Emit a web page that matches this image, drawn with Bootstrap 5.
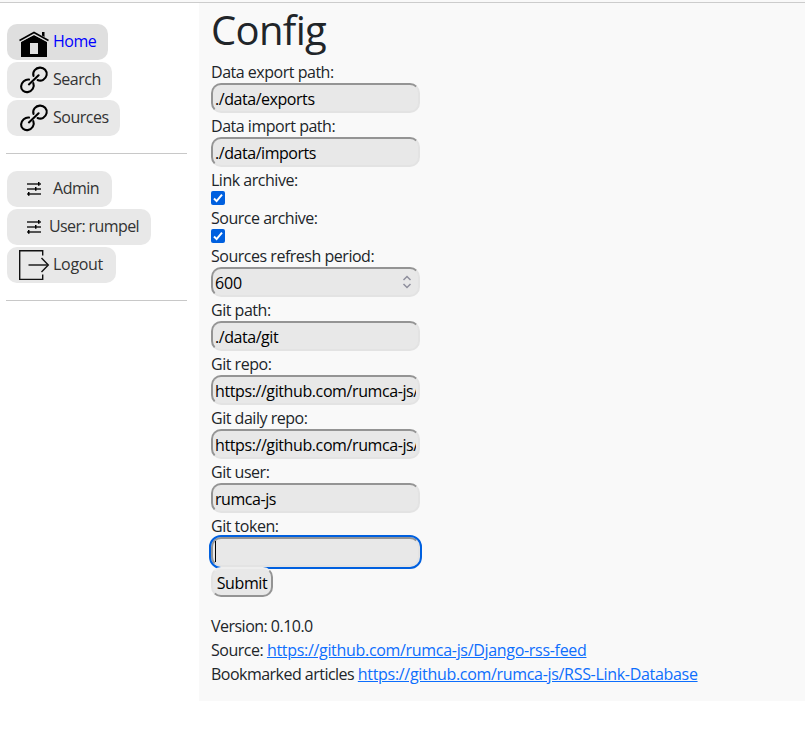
<!DOCTYPE html>
<html lang="en">
<head>
<meta charset="utf-8">
<title>Config</title>
<meta name="viewport" content="width=device-width, initial-scale=1">
<link href="https://cdn.jsdelivr.net/npm/bootstrap@5.3.0/dist/css/bootstrap.min.css" rel="stylesheet">
<style>
body{font-family:"Segoe UI","Open Sans","Noto Sans",sans-serif;font-size:16px;letter-spacing:-.48px;overflow:hidden}
.topline{height:3px;background:#f9f9f9;border-bottom:1px solid #ccc}
.side{width:199px;padding:21px 12px 0 7px}
.menu-link{height:36px;padding-left:11px;margin-bottom:2px;border-radius:10px;background:#e8e8e8;color:#333;line-height:34px}
.menu-link svg{width:32px;height:32px;margin:2px 3px 0 0;flex:none}
.menu-link span{height:36px;white-space:nowrap}
.menu-link.current{background:#dfdfdf;color:#00f}
.w-home{width:101px}.w-search,.w-admin{width:105px}.w-sources{width:113px}.w-user{width:144px;letter-spacing:-.6px}.w-logout{width:109px;letter-spacing:-.3px}
.menu-link.w-user svg{margin-right:-1px}
.divider{height:1px;background:#c8c8c8;margin:17px 0 17px -1px}
.main{height:698px;background:#f9f9f9;padding-left:12px}
.main h1{font-size:40px;line-height:48px;height:48px;margin:0 0 8px;font-weight:400;letter-spacing:-.65px;padding-top:3px}
.main form{height:538px}
.main label{height:24px;line-height:27px}
.field{width:209px;height:30px;padding:2px 2px 0;border:2px solid;border-color:#949494 #e3e3e3 #e3e3e3 #949494;border-radius:10px;background:#e8e8e8;color:#000;letter-spacing:-.45px;outline:0;line-height:24px}
.field.active{outline:2px solid #0060df;outline-offset:0}
.field.url{letter-spacing:-.4px}
.field.number{letter-spacing:-.2px}
.stepper{width:209px;position:relative}
.stepper svg{position:absolute;right:8px;top:8px;width:10px;height:14px}
.tick{width:14px;height:14px;background:#0060df;border-radius:2px}
.send{width:62px;height:30px;border:2px solid;border-color:#eee #949494 #949494 #e3e3e3;border-radius:10px;background:#e8e8e8;color:#000;padding:2px 0 0;letter-spacing:-.4px;line-height:24px}
.about{line-height:24px;padding-top:17px}
.about div{height:24px;white-space:nowrap}
.about div:first-child,.about div:last-child{letter-spacing:-.52px}
.about a{color:#0d6efd;letter-spacing:-.31px}
.caret{width:1px;height:21px;background:#000}
</style>
</head>
<body>
<svg class="d-none" xmlns="http://www.w3.org/2000/svg">
<symbol id="i-home" viewBox="0 0 32 32"><path d="M3 15.500 16 9l13 6.500V31H3z"/><path d="M12 17h8v11h-8z" fill="#dfdfdf"/><path d="M24 6h2.500v7l-2.500-1.500z"/><path d="M1.500 15 16 7l14.500 8" fill="none" stroke="#dfdfdf" stroke-width="3.200"/><path d="M1.500 14.500 16 6.500l14.500 8" fill="none" stroke="#000" stroke-width="1.600"/></symbol>
<symbol id="i-chain" viewBox="0 0 32 32"><g transform="translate(.2 .9)" fill="none" stroke="#000" stroke-width="2.100" stroke-linecap="round"><path d="M15.300 11c-1.300-4.600 2.400-8 6.300-8.300 4.400-.3 7.600 3.600 6.800 7.500-.9 4.200-5.200 6.800-9 4.900"/><path d="M10.800 14.600c-3.800-.5-7.700 2.900-7.900 6.900-.2 3.600 3.200 6.200 6.600 5.700 4.500-.6 7.200-5.200 5.600-9"/><path d="m10.700 19.500 9.700-9.100"/></g></symbol>
<symbol id="i-tune" viewBox="0 0 32 32"><path d="M9 10.900h14M9 15.900h14M9 20.900h14" stroke="#222" stroke-width="1.500"/><path d="M20 9.100h1.500v3.600H20zM17 14.100h1.500v3.600H17zM10 19.100h1.500v3.600H10z"/></symbol>
<symbol id="i-exit" viewBox="0 0 32 32"><g fill="none" stroke="#111" stroke-width="1.400"><path d="M24.700 6.500V1.700H1.700v28.700h23v-4.800"/><path d="M10.500 16h19"/><path d="m23.500 9 6.800 7-6.800 7"/></g></symbol>
<symbol id="i-check" viewBox="0 0 14 14"><path d="m3 7.500 2.600 2.600L11 3.700" fill="none" stroke="#fff" stroke-width="2"/></symbol>
</svg>
<div class="topline"></div>
<div class="d-flex">
<nav class="side flex-shrink-0">
<a href="#" class="menu-link current w-home d-flex text-decoration-none"><svg><use href="#i-home"/></svg><span>Home</span></a>
<a href="#" class="menu-link w-search d-flex text-decoration-none"><svg><use href="#i-chain"/></svg><span>Search</span></a>
<a href="#" class="menu-link w-sources d-flex text-decoration-none"><svg><use href="#i-chain"/></svg><span>Sources</span></a>
<div class="divider"></div>
<a href="#" class="menu-link w-admin d-flex text-decoration-none"><svg><use href="#i-tune"/></svg><span>Admin</span></a>
<a href="#" class="menu-link w-user d-flex text-decoration-none"><svg><use href="#i-tune"/></svg><span>User: rumpel</span></a>
<a href="#" class="menu-link w-logout d-flex text-decoration-none"><svg><use href="#i-exit"/></svg><span>Logout</span></a>
<div class="divider"></div>
</nav>
<main class="main flex-grow-1">
<h1>Config</h1>
<form class="d-flex flex-column align-items-start">
<label>Data export path:</label><input class="field" value="./data/exports">
<label>Data import path:</label><input class="field" value="./data/imports">
<label>Link archive:</label><svg class="tick"><use href="#i-check"/></svg>
<label>Source archive:</label><svg class="tick"><use href="#i-check"/></svg>
<label>Sources refresh period:</label><div class="stepper d-flex"><input class="field number" value="600"><svg viewBox="0 0 10 14"><path d="M1.500 5 5 1.500 8.500 5M1.500 9 5 12.500 8.500 9" fill="none" stroke="#8f8f9d" stroke-width="1.500"/></svg></div>
<label>Git path:</label><input class="field" value="./data/git">
<label>Git repo:</label><input class="field url" value="https://github.com/rumca-js/RSS-Link-Database">
<label>Git daily repo:</label><input class="field url" value="https://github.com/rumca-js/RSS-Link-Database-daily">
<label>Git user:</label><input class="field" value="rumca-js">
<label>Git token:</label><div class="field active"><div class="caret"></div></div>
<button type="button" class="send">Submit</button>
</form>
<div class="about">
<div>Version: 0.10.0</div>
<div>Source: <a href="#">https://github.com/rumca-js/Django-rss-feed</a></div>
<div>Bookmarked articles <a href="#">https://github.com/rumca-js/RSS-Link-Database</a></div>
</div>
</main>
</div>
<script src="https://cdn.jsdelivr.net/npm/bootstrap@5.3.0/dist/js/bootstrap.bundle.min.js"></script>
</body>
</html>
